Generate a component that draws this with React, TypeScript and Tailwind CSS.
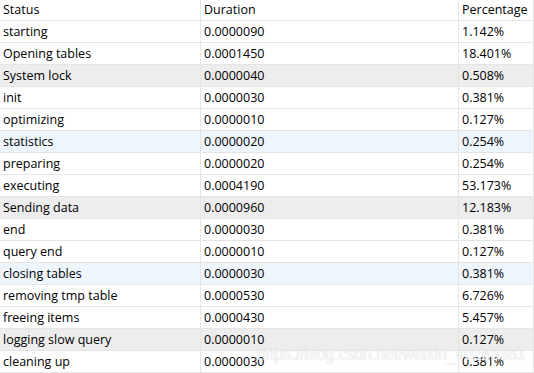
import React from "react";

const rows = [
  { status: "starting", duration: "0.0000090", pct: "1.142%", bg: "" },
  { status: "Opening tables", duration: "0.0001450", pct: "18.401%", bg: "" },
  { status: "System lock", duration: "0.0000040", pct: "0.508%", bg: "bg-[#ededed]" },
  { status: "init", duration: "0.0000030", pct: "0.381%", bg: "" },
  { status: "optimizing", duration: "0.0000010", pct: "0.127%", bg: "" },
  { status: "statistics", duration: "0.0000020", pct: "0.254%", bg: "bg-[#eef5fd]" },
  { status: "preparing", duration: "0.0000020", pct: "0.254%", bg: "" },
  { status: "executing", duration: "0.0004190", pct: "53.173%", bg: "" },
  { status: "Sending data", duration: "0.0000960", pct: "12.183%", bg: "bg-[#ededed]" },
  { status: "end", duration: "0.0000030", pct: "0.381%", bg: "" },
  { status: "query end", duration: "0.0000010", pct: "0.127%", bg: "" },
  { status: "closing tables", duration: "0.0000030", pct: "0.381%", bg: "bg-[#eef5fd]" },
  { status: "removing tmp table", duration: "0.0000530", pct: "6.726%", bg: "" },
  { status: "freeing items", duration: "0.0000430", pct: "5.457%", bg: "" },
  { status: "logging slow query", duration: "0.0000010", pct: "0.127%", bg: "bg-[#ededed]" },
  { status: "cleaning up", duration: "0.0000030", pct: "0.381%", bg: "" },
];

const cell = "flex items-center pl-[3px] pt-px border-r border-b border-[#e5e5e5] whitespace-nowrap overflow-hidden";

export default function App() {
  return (
    <div className="relative w-[534px] h-[373px] overflow-hidden bg-white text-[12.5px] text-black [font-family:'Open_Sans','Noto_Sans',sans-serif]">
      <div className="grid grid-cols-[201px_258px_75px]">
        <div className={`${cell} h-[21px]`}>Status</div>
        <div className={`${cell} h-[21px]`}>Duration</div>
        <div className={`${cell} h-[21px]`}>Percentage</div>
        {rows.map((r, i) => (
          <React.Fragment key={i}>
            <div className={`${cell} h-[22px] ${r.bg}`}>{r.status}</div>
            <div className={`${cell} h-[22px] ${r.bg}`}>{r.duration}</div>
            <div className={`${cell} h-[22px] ${r.bg}`}>{r.pct}</div>
          </React.Fragment>
        ))}
      </div>
      {/* csdn watermark */}
      <div className="absolute left-[257px] top-[344px] text-[15.8px] leading-none whitespace-nowrap text-white/90 origin-top-left [transform:scaleY(1.2)] [font-family:'Liberation_Sans',Arial,sans-serif] [text-shadow:0_0_1px_rgba(0,0,0,0.25)]">
        https://blog.csdn.net/weixin_40288381
      </div>
    </div>
  );
}
